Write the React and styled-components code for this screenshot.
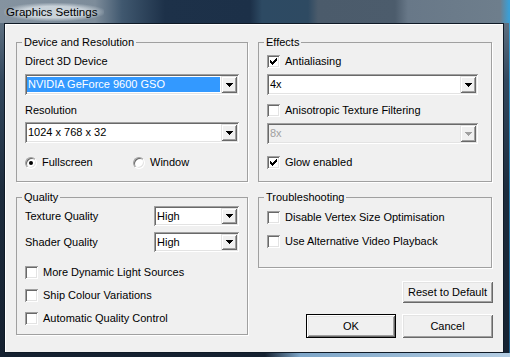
import React from "react";
import styled, { createGlobalStyle } from "styled-components";

const GlobalStyle = createGlobalStyle`
  html, body {
    margin: 0;
    padding: 0;
  }
  body {
    font-family: "Liberation Sans", Arial, sans-serif;
    font-size: 11px;
    color: #000;
  }
`;

const Window = styled.div`
  width: 510px;
  height: 357px;
  display: flex;
  flex-direction: column;
  overflow: hidden;
  background:
    linear-gradient(90deg, rgba(0, 0, 0, 0) 265px, #7ea6c8 300px, #b4cde2 100%) bottom / 100% 4px no-repeat,
    linear-gradient(180deg, #3aa2d8, #1d5d86) right / 1px 100% no-repeat,
    linear-gradient(180deg, #6f808f 0px, #33485e 80px, #1d2c3d 190px, #152130 100%);
`;

const TitleBar = styled.div`
  height: 23px;
  flex: none;
  display: flex;
  align-items: center;
  padding-left: 6px;
  background: linear-gradient(
    90deg,
    #8593a0 0px,
    #7d8c9a 95px,
    #40586f 122px,
    #1d3149 165px,
    #1c3048 250px,
    #2d4a63 262px,
    #2e4a62 308px,
    #4b5b6b 318px,
    #4c5c6c 395px,
    #687888 408px,
    #6e7e8c 500px,
    #3a9fd6 509px
  );
`;

const TitleText = styled.span`
  font-size: 11.6px;
  line-height: 14px;
  padding: 2px 6px 2px 2px;
  margin-left: -2px;
  border-radius: 8px;
  background: radial-gradient(ellipse at center, rgba(214, 222, 228, 0.85) 45%, rgba(214, 222, 228, 0) 75%);
`;

const Client = styled.div`
  flex: 1;
  margin: 0 6px 4px 4px;
  border: 1px solid #0f1a26;
  background: #f0f0f0;
  box-shadow: inset 1px 1px 0 #fff;
  display: flex;
  gap: 10px;
  padding: 12px 11px 0;
`;

const Column = styled.div`
  width: ${(p) => p.$w}px;
  flex: none;
  display: flex;
  flex-direction: column;
`;

const Group = styled.fieldset`
  margin: ${(p) => p.$mt || 0}px 0 0;
  padding: 0;
  min-width: 0;
  height: ${(p) => p.$h}px;
  box-sizing: border-box;
  border: 1px solid #a0a0a0;
  box-shadow: 1px 1px 0 #fff;
`;

const Legend = styled.legend`
  margin-left: 5px;
  padding: 0 2px;
  line-height: 13px;
  font-size: 11px;
`;

const Body = styled.div`
  display: flex;
  flex-direction: column;
  padding: 0 8px;
`;

const FieldLabel = styled.div`
  line-height: 13px;
  margin-top: ${(p) => p.$mt}px;
`;

const Combo = styled.div`
  width: ${(p) => p.$w}px;
  height: ${(p) => p.$h || 21}px;
  margin-top: ${(p) => p.$mt || 0}px;
  box-sizing: border-box;
  padding: 2px;
  display: flex;
  background: ${(p) => (p.$disabled ? "#f0f0f0" : "#fff")};
  box-shadow: inset 1px 1px 0 #a0a0a0, inset -1px -1px 0 #fff, inset 2px 2px 0 #696969,
    inset -2px -2px 0 #e3e3e3;
`;

const ComboValue = styled.div`
  flex: 1;
  display: flex;
  align-items: center;
  margin: 1px 1px 1px 0;
  padding-left: 1px;
  line-height: 13px;
  background: ${(p) => (p.$selected ? "#3399ff" : "transparent")};
  color: ${(p) => (p.$selected ? "#fff" : p.$disabled ? "#a0a0a0" : "#000")};
`;

const DropButton = styled.div`
  width: 16px;
  flex: none;
  display: flex;
  align-items: center;
  justify-content: center;
  background: #f0f0f0;
  box-shadow: inset 1px 1px 0 #e3e3e3, inset -1px -1px 0 #696969, inset 2px 2px 0 #fff,
    inset -2px -2px 0 #a0a0a0;
`;

const CheckRow = styled.label`
  display: flex;
  align-items: center;
  gap: 5px;
  height: 13px;
  line-height: 13px;
  margin-top: ${(p) => p.$mt}px;
`;

const Box = styled.span`
  width: 13px;
  height: 13px;
  flex: none;
  display: flex;
  background: #fff;
  box-shadow: inset 1px 1px 0 #a0a0a0, inset -1px -1px 0 #fff, inset 2px 2px 0 #696969,
    inset -2px -2px 0 #e3e3e3;
`;

const RadioRow = styled.div`
  display: flex;
  height: 13px;
  margin-top: ${(p) => p.$mt}px;
`;

const RadioOption = styled.label`
  width: ${(p) => (p.$w ? `${p.$w}px` : "auto")};
  display: flex;
  align-items: center;
  gap: 5px;
  line-height: 13px;
`;

const RadioDot = styled.span`
  position: relative;
  width: 12px;
  height: 12px;
  flex: none;
  box-sizing: border-box;
  border-radius: 50%;
  background: #fff;
  border: 1px solid;
  border-color: #a0a0a0 #fff #fff #a0a0a0;
  box-shadow: inset 1px 1px 0 #696969, inset -1px -1px 0 #e3e3e3;
  &::after {
    content: "";
    display: ${(p) => (p.$on ? "block" : "none")};
    position: absolute;
    left: 3px;
    top: 3px;
    width: 4px;
    height: 4px;
    border-radius: 50%;
    background: #000;
  }
`;

const QualityRow = styled.div`
  display: flex;
  align-items: center;
  justify-content: space-between;
  height: 20px;
  margin-top: ${(p) => p.$mt}px;
`;

const ButtonRow = styled.div`
  display: flex;
  justify-content: flex-end;
  gap: 6px;
  margin: ${(p) => p.$mt}px -1px 0 0;
`;

const ActionButton = styled.button`
  width: ${(p) => p.$w}px;
  height: ${(p) => p.$h}px;
  padding: 0;
  box-sizing: border-box;
  font-family: "Liberation Sans", Arial, sans-serif;
  font-size: 11px;
  color: #000;
  background: #f0f0f0;
  border: ${(p) => (p.$default ? "1px solid #000" : "none")};
  box-shadow: inset 1px 1px 0 #fff, inset -1px -1px 0 #696969, inset 2px 2px 0 #e3e3e3,
    inset -2px -2px 0 #a0a0a0;
`;

function Arrow({ disabled }) {
  return (
    <svg width="7" height="4" viewBox="0 0 7 4" shapeRendering="crispEdges">
      <path d="M0 0h7v1H0zM1 1h5v1H1zM2 2h3v1H2zM3 3h1v1H3z" fill={disabled ? "#a0a0a0" : "#000"} />
    </svg>
  );
}

function ComboBox({ value, width, height, mt, selected, disabled }) {
  return (
    <Combo $w={width} $h={height} $mt={mt} $disabled={disabled}>
      <ComboValue $selected={selected} $disabled={disabled}>
        {value}
      </ComboValue>
      <DropButton>
        <Arrow disabled={disabled} />
      </DropButton>
    </Combo>
  );
}

const tops = [5, 6, 7, 6, 5, 4, 3];

function CheckBox({ label, checked, mt }) {
  return (
    <CheckRow $mt={mt}>
      <Box>
        {checked && (
          <svg width="13" height="13" viewBox="0 0 13 13" shapeRendering="crispEdges">
            {tops.map((t, i) => (
              <rect key={i} x={3 + i} y={t} width="1" height="3" fill="#000" />
            ))}
          </svg>
        )}
      </Box>
      <span>{label}</span>
    </CheckRow>
  );
}

export default function App() {
  return (
    <>
      <GlobalStyle />
      <Window>
        <TitleBar>
          <TitleText>Graphics Settings</TitleText>
        </TitleBar>
        <Client>
          <Column $w={232}>
            <Group $h={146}>
              <Legend>Device and Resolution</Legend>
              <Body>
                <FieldLabel $mt={6}>Direct 3D Device</FieldLabel>
                <ComboBox value="NVIDIA GeForce 9600 GSO" width={214} mt={6} selected />
                <FieldLabel $mt={9}>Resolution</FieldLabel>
                <ComboBox value="1024 x 768 x 32" width={214} mt={5} />
                <RadioRow $mt={13}>
                  <RadioOption $w={108}>
                    <RadioDot $on />
                    <span>Fullscreen</span>
                  </RadioOption>
                  <RadioOption>
                    <RadioDot />
                    <span>Window</span>
                  </RadioOption>
                </RadioRow>
              </Body>
            </Group>
            <Group $h={144} $mt={9}>
              <Legend>Quality</Legend>
              <Body>
                <QualityRow $mt={2}>
                  <span>Texture Quality</span>
                  <ComboBox value="High" width={85} height={20} />
                </QualityRow>
                <QualityRow $mt={6}>
                  <span>Shader Quality</span>
                  <ComboBox value="High" width={85} height={20} />
                </QualityRow>
                <CheckBox label="More Dynamic Light Sources" mt={14} />
                <CheckBox label="Ship Colour Variations" mt={10} />
                <CheckBox label="Automatic Quality Control" mt={10} />
              </Body>
            </Group>
          </Column>
          <Column $w={234}>
            <Group $h={146}>
              <Legend>Effects</Legend>
              <Body>
                <CheckBox label="Antialiasing" checked mt={6} />
                <ComboBox value="4x" width={211} mt={6} />
                <CheckBox label="Anisotropic Texture Filtering" mt={9} />
                <ComboBox value="8x" width={211} mt={6} disabled />
                <CheckBox label="Glow enabled" checked mt={12} />
              </Body>
            </Group>
            <Group $h={77} $mt={9}>
              <Legend>Troubleshooting</Legend>
              <Body>
                <CheckBox label="Disable Vertex Size Optimisation" mt={7} />
                <CheckBox label="Use Alternative Video Playback" mt={11} />
              </Body>
            </Group>
            <ButtonRow $mt={13}>
              <ActionButton $w={91} $h={22}>
                Reset to Default
              </ActionButton>
            </ButtonRow>
            <ButtonRow $mt={11}>
              <ActionButton $w={90} $h={24} $default>
                OK
              </ActionButton>
              <ActionButton $w={91} $h={24}>
                Cancel
              </ActionButton>
            </ButtonRow>
          </Column>
        </Client>
      </Window>
    </>
  );
}
